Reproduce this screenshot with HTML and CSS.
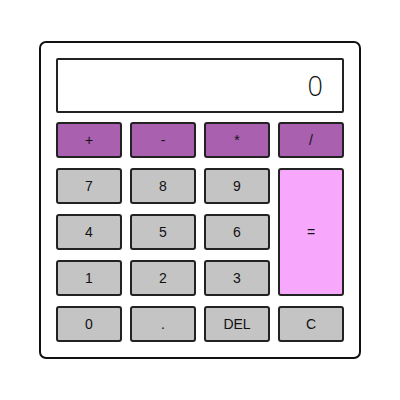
FILE: index.html
```html
<!DOCTYPE html>
<html>
<head>
<meta charset="utf-8">
<link rel="stylesheet" href="styles.css">
</head>
<body>
<div class="calc">
  <div class="display">0</div>
  <div class="keys">
    <button class="key op">+</button>
    <button class="key op">-</button>
    <button class="key op">*</button>
    <button class="key op">/</button>
    <button class="key">7</button>
    <button class="key">8</button>
    <button class="key">9</button>
    <button class="key eq">=</button>
    <button class="key">4</button>
    <button class="key">5</button>
    <button class="key">6</button>
    <button class="key">1</button>
    <button class="key">2</button>
    <button class="key">3</button>
    <button class="key">0</button>
    <button class="key">.</button>
    <button class="key">DEL</button>
    <button class="key">C</button>
  </div>
</div>
</body>
</html>
```
FILE: styles.css
```css
html, body {
  margin: 0;
  padding: 0;
  background: #fff;
}
body {
  width: 400px;
  height: 400px;
  display: flex;
  align-items: center;
  justify-content: center;
  font-family: "Liberation Sans", Arial, sans-serif;
}
.calc {
  border: 2px solid #111;
  border-radius: 7px;
  padding: 15px;
  background: #fff;
}
.display {
  box-sizing: border-box;
  width: 288px;
  height: 55px;
  border: 2px solid #222;
  border-radius: 2px;
  margin-bottom: 9px;
  display: flex;
  align-items: center;
  justify-content: flex-end;
  padding-right: 19px;
  font-size: 27px;
  font-weight: 300;
  font-family: "Open Sans", "Liberation Sans", sans-serif;
  color: #111;
}
.keys {
  display: grid;
  grid-template-columns: repeat(4, 66px);
  grid-auto-rows: 36px;
  column-gap: 8px;
  row-gap: 10px;
}
.key {
  box-sizing: border-box;
  margin: 0;
  padding: 0;
  border: 2px solid #222;
  border-radius: 3px;
  background: #c4c4c4;
  font-family: "Liberation Sans", Arial, sans-serif;
  font-size: 14px;
  color: #111;
}
.op {
  background: #a960ae;
}
.eq {
  grid-column: 4;
  grid-row: 2 / span 3;
  background: #f8a8fc;
}
```
